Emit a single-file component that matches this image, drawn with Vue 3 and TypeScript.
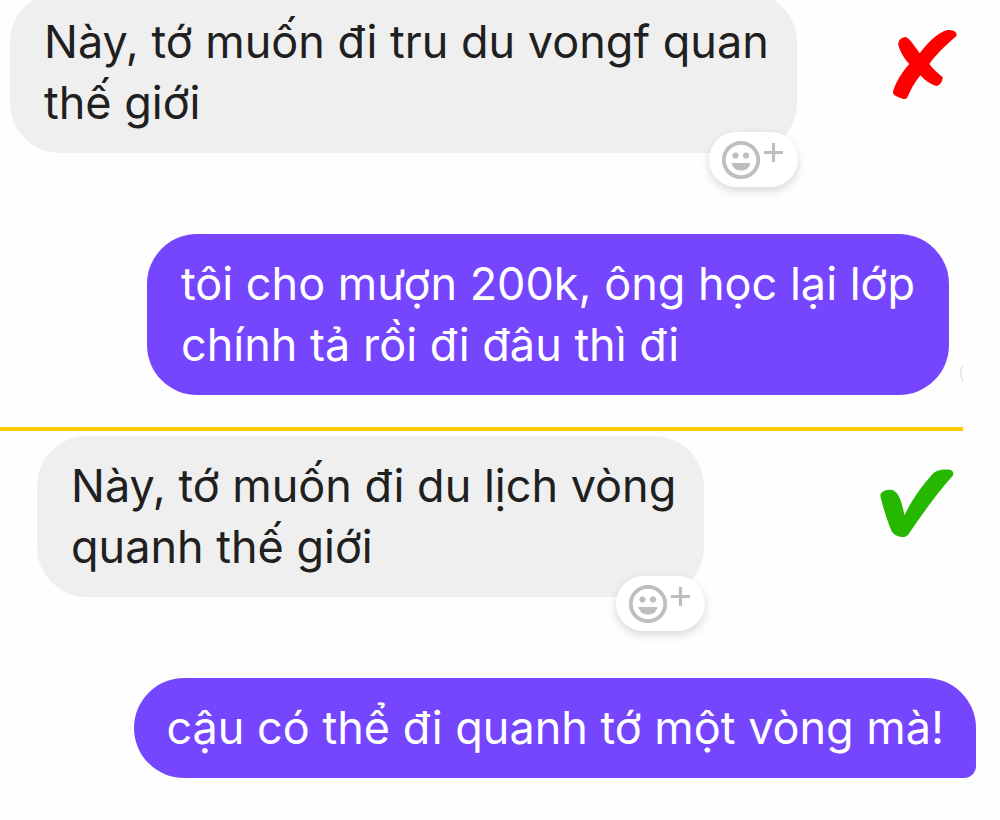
<script setup lang="ts">
interface Message {
  id: string
  side: 'incoming' | 'outgoing'
  lines: string[]
  reactable: boolean
}

interface Conversation {
  id: string
  correct: boolean
  messages: Message[]
}

const conversations: Conversation[] = [
  {
    id: 'wrong',
    correct: false,
    messages: [
      { id: 'm1', side: 'incoming', lines: ['Này, tớ muốn đi tru du vongf quan', 'thế giới'], reactable: true },
      { id: 'm2', side: 'outgoing', lines: ['tôi cho mượn 200k, ông học lại lớp', 'chính tả rồi đi đâu thì đi'], reactable: false },
    ],
  },
  {
    id: 'right',
    correct: true,
    messages: [
      { id: 'm3', side: 'incoming', lines: ['Này, tớ muốn đi du lịch vòng', 'quanh thế giới'], reactable: true },
      { id: 'm4', side: 'outgoing', lines: ['cậu có thể đi quanh tớ một vòng mà!'], reactable: false },
    ],
  },
]
</script>

<template>
  <main class="chat">
    <section v-for="c in conversations" :key="c.id" class="conversation" :class="c.id">
      <div v-for="m in c.messages" :key="m.id" class="row" :class="m.side">
        <div class="bubble" :class="m.id">
          <p class="text"><span v-for="line in m.lines" :key="line" class="line">{{ line }}</span></p>
          <button v-if="m.reactable" class="react" type="button" aria-label="Thả cảm xúc">
            <svg width="64" height="40" viewBox="0 0 64 40" aria-hidden="true">
              <circle cx="20" cy="20" r="17.2" fill="none" stroke="#bebebe" stroke-width="3.8" />
              <circle cx="14.5" cy="15.500" r="3.1" fill="#bebebe" />
              <circle cx="25" cy="15.500" r="3.1" fill="#bebebe" />
              <path d="M10.500 23H29.500C28.500 28 25 30.500 20 30.500C15 30.500 11.500 28 10.500 23Z" fill="#bebebe" />
              <path d="M52.500 3V22M43 12.500H62" fill="none" stroke="#bebebe" stroke-width="3.2" />
            </svg>
          </button>
        </div>
        <template v-if="m.side === 'incoming'">
          <svg v-if="c.correct" class="mark check" width="74" height="69" viewBox="62 57 222 207" role="img" aria-label="Đúng">
            <path fill="#26b800" d="M63 138C62 124 82 118 97 119C120 124 130 165 135 196C155 155 185 110 220 72C235 57 258 58 274 60C283 64 284 72 279 79C235 128 190 190 150 249C142 263 128 263 116 259C104 254 98 248 94 238C82 205 70 170 63 138Z" />
          </svg>
          <svg v-else class="mark cross" width="66" height="71" viewBox="66 57 198 213" role="img" aria-label="Sai">
            <path fill="#ff0000" d="M85 105C84 90 95 82 107 81C118 84 132 106 149 130C167 105 193 78 218 65C230 58 249 58 257 67C262 73 261 77 256 81C229 104 197 134 178 162C190 178 207 193 218 201C219 213 210 226 200 228C180 223 164 210 151 196C133 218 123 239 112 262C109 267 105 268 101 267C91 264 81 260 73 255C69 252 68 248 70 241C80 211 98 184 118 162C103 147 90 125 85 105Z" />
          </svg>
        </template>
        <span v-if="m.id === 'm2'" class="receipt" aria-hidden="true"></span>
      </div>
    </section>
  </main>
</template>

<style>
body {
  margin: 0;
  background: #fefefe;
}
</style>

<style scoped>
.chat {
  overflow: hidden;
  font-family: Inter, Roboto, "Liberation Sans", sans-serif;
  font-size: 45px;
  line-height: 61px;
}
.conversation {
  display: flex;
  flex-direction: column;
  gap: 81px;
}
.wrong {
  position: relative;
  margin-top: -8px;
  padding-bottom: 32px;
}
.wrong::after {
  content: "";
  position: absolute;
  left: 0;
  right: 37px;
  bottom: -4px;
  height: 4px;
  background: #ffc800;
}
.right {
  padding: 9px 0 42px;
}
.row {
  position: relative;
  display: flex;
  justify-content: space-between;
  align-items: flex-start;
}
.outgoing {
  justify-content: flex-end;
}
.bubble {
  position: relative;
  box-sizing: border-box;
  padding: 19px 34px 20px;
  border-radius: 50px;
  white-space: nowrap;
}
.text {
  margin: 0;
}
.line {
  display: block;
}
.incoming .bubble {
  padding-right: 28px;
  background: #efefef;
  color: #202020;
}
.outgoing .bubble {
  background: #7646ff;
  color: #fff;
}
.m1 {
  margin-left: 10px;
}
.m2 {
  margin-right: 51px;
}
.m3 {
  margin-left: 37px;
}
.bubble.m4 {
  margin-right: 24px;
  padding-right: 32px;
  padding-left: 32px;
  border-bottom-right-radius: 12px;
}
.react {
  position: absolute;
  right: -1px;
  bottom: -34px;
  display: flex;
  align-items: center;
  width: 89px;
  height: 55px;
  padding: 0 0 0 12px;
  border: 0;
  border-radius: 28px;
  background: #fff;
  box-shadow: 0 4px 10px rgba(0, 0, 0, 0.15);
}
.mark {
  flex: none;
}
.cross {
  margin: 37px 42px 0 0;
}
.check {
  margin: 33px 46px 0 0;
}
.receipt {
  position: absolute;
  right: 37px;
  bottom: 8px;
  width: 3px;
  height: 28px;
  overflow: hidden;
}
.receipt::before {
  content: "";
  position: absolute;
  box-sizing: border-box;
  width: 28px;
  height: 28px;
  border: 1px solid #d4d4d4;
  border-radius: 50%;
}
</style>
